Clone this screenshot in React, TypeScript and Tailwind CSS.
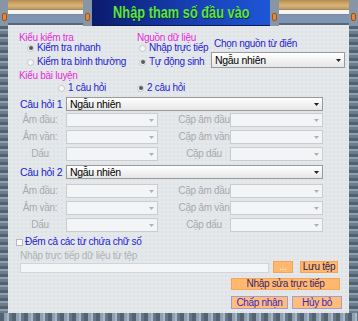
import React from "react";

const tile =
  "bg-[repeating-linear-gradient(180deg,#53626f_0px,#53626f_3px,#8fa0b0_3px,#8fa0b0_5px,#6b7c8c_5px,#6b7c8c_8px)]";
const tileH =
  "bg-[repeating-linear-gradient(90deg,#53626f_0px,#53626f_4px,#8fa0b0_4px,#8fa0b0_7px,#a9b8c6_7px,#a9b8c6_9px,#66778a_9px,#66778a_12px)]";

function Post({ w }: { w: string }) {
  return (
    <div className={`${w} h-full flex flex-col items-center bg-[#8795a4]`}>
      <div className="mt-[13px] w-[5px] h-[8px] rounded-[2px] bg-[#e08a3a] border border-[#9a5020]" />
    </div>
  );
}

function Wood() {
  return (
    <div className="flex-1 h-full flex flex-col">
      <div className="h-[9px] bg-[linear-gradient(180deg,#b58c50,#d8b478_60%,#c49a5e)]" />
      <div className="h-[1px] bg-[#9c8a70]" />
      <div className="h-[4px] bg-[#f4f4f2]" />
      <div className="h-[1px] bg-[#7a8898]" />
      <div className="h-[8px] bg-[#7d94b2]" />
      <div className="h-[2px] bg-[#56677c]" />
      <div className="flex-1 bg-[#e6e9ec]" />
    </div>
  );
}

function Radio({ checked, label }: { checked?: boolean; label: string }) {
  return (
    <div className="flex items-center gap-[3px] h-[10px]">
      <span className="w-[7px] h-[7px] rounded-full border border-[#c8c8c8] bg-[#f6f6f6] flex items-center justify-center">
        {checked && <span className="w-[4px] h-[4px] rounded-full bg-[#5a5a5a]" />}
      </span>
      <span className="text-[#2323d2] whitespace-nowrap">{label}</span>
    </div>
  );
}

function Arrow({ dim }: { dim?: boolean }) {
  return (
    <svg width="5" height="3" viewBox="0 0 5 3" className="mr-[3px]">
      <path d="M0 0 L5 0 L2.5 3 Z" fill={dim ? "#b0b0b0" : "#202020"} />
    </svg>
  );
}

function Select({ w, h = "h-[14px]" }: { w: string; h?: string }) {
  return (
    <div
      className={`${w} ${h} flex items-center justify-between border border-[#9a9a9a] bg-[linear-gradient(180deg,#ffffff,#e6e6e6)] text-black`}
    >
      <span className="pl-[3px] text-[10.5px]">Ngẫu nhiên</span>
      <Arrow />
    </div>
  );
}

function DimSelect({ w }: { w: string }) {
  return (
    <div className={`${w} h-[14px] flex items-center justify-end border border-[#c9cdd1] bg-[#f3f4f5]`}>
      <Arrow dim />
    </div>
  );
}

function SubRow({ a, b, mt }: { a: string; b: string; mt: string }) {
  return (
    <div className={`flex items-center h-[14px] ${mt}`}>
      <div className="ml-[10px] w-[44px] flex justify-center whitespace-nowrap text-[#a7a9ab]">{a}</div>
      <div className="ml-[4px]">
        <DimSelect w="w-[92px]" />
      </div>
      <div className="ml-[20px] w-[52px] flex justify-center whitespace-nowrap text-[#a7a9ab]">{b}</div>
      <DimSelect w="w-[93px]" />
    </div>
  );
}

function Question({ n, mt }: { n: string; mt: string }) {
  return (
    <div className={`flex items-center h-[14px] ${mt}`}>
      <div className="ml-[12px] w-[46px] whitespace-nowrap text-[#2323d2] text-[10.5px]">Câu hỏi {n}</div>
      <Select w="w-[257px]" />
    </div>
  );
}

export default function App() {
  return (
    <div className="w-[358px] h-[321px] flex flex-col font-['Liberation_Sans',Arial,sans-serif] text-[10px] leading-[10px] tracking-[-0.3px]">
      {/* Header */}
      <div className="h-[26px] flex">
        <div className="w-[92px] flex">
          <Post w="w-[8px]" />
          <Wood />
          <Post w="w-[9px]" />
        </div>
        <div className="w-[178px] flex items-center justify-center bg-[linear-gradient(90deg,#0b1a6c,#173fb4_55%,#1e56d6)] border-b border-[#0a1850]">
          <span className="inline-block scale-x-[0.8] text-[16px] leading-[18px] font-bold tracking-normal text-[#5ce34e] [text-shadow:1px_1px_0_#0b2a18]">
            Nhập tham số đầu vào
          </span>
        </div>
        <div className="w-[88px] flex">
          <Post w="w-[9px]" />
          <Wood />
          <Post w="w-[9px]" />
        </div>
      </div>

      {/* Body */}
      <div className="flex h-[287px]">
        <div className={`w-[8px] ${tile}`} />
        <div className="w-[341px] bg-[#e5e8eb] bg-[radial-gradient(#d3d8dd_0.6px,transparent_0.8px)] bg-[length:4px_4px] flex flex-col">
          {/* Top options */}
          <div className="flex mt-[7px]">
            <div className="w-[129px] pl-[11px] flex flex-col">
              <div className="h-[10px] text-[#e62ade]">Kiểu kiểm tra</div>
              <div className="pl-[8px]">
                <Radio checked label="Kiểm tra nhanh" />
              </div>
              <div className="pl-[8px] mt-[4px]">
                <Radio label="Kiểm tra bình thường" />
              </div>
            </div>
            <div className="w-[74px] flex flex-col">
              <div className="h-[10px] text-[#e62ade] whitespace-nowrap">Nguồn dữ liệu</div>
              <div className="pl-[2px]">
                <Radio label="Nhập trực tiếp" />
              </div>
              <div className="pl-[2px] mt-[4px]">
                <Radio checked label="Tự động sinh" />
              </div>
            </div>
            <div className="w-[134px] flex flex-col">
              <div className="mt-[6px] h-[10px] pl-[3px] text-[#2323d2] whitespace-nowrap">Chọn nguồn từ điển</div>
              <div className="mt-[3px]">
                <Select w="w-[134px]" h="h-[16px]" />
              </div>
            </div>
          </div>

          <div className="mt-[3px] pl-[11px] h-[10px] text-[#e62ade]">Kiểu bài luyện</div>
          <div className="mt-[2px] flex pl-[50px]">
            <div className="w-[79px]">
              <Radio label="1 câu hỏi" />
            </div>
            <Radio checked label="2 câu hỏi" />
          </div>

          <Question n="1" mt="mt-[4px]" />
          <SubRow a="Âm đầu:" b="Cặp âm đầu" mt="mt-[2px]" />
          <SubRow a="Âm vần:" b="Cặp âm vần" mt="mt-[3px]" />
          <SubRow a="Dấu" b="Cặp dấu" mt="mt-[3px]" />

          <Question n="2" mt="mt-[4px]" />
          <SubRow a="Âm đầu:" b="Cặp âm đầu" mt="mt-[5px]" />
          <SubRow a="Âm vần:" b="Cặp âm vần" mt="mt-[3px]" />
          <SubRow a="Dấu" b="Cặp dấu" mt="mt-[3px]" />

          <div className="mt-[5px] h-[10px] pl-[8px] flex items-center gap-[2px]">
            <span className="w-[7px] h-[7px] border border-[#b8b8b8] bg-[#f8f8f8]" />
            <span className="text-[#2323d2] whitespace-nowrap">Đếm cả các từ chứa chữ số</span>
          </div>
          <div className="mt-[4px] h-[10px] pl-[12px] text-[#aeb1b4] whitespace-nowrap">
            Nhập trực tiếp dữ liệu từ tệp
          </div>

          <div className="flex items-end h-[12px]">
            <div className="ml-[12px] w-[249px] h-[10px] border border-[#d2d5d8] bg-[#f4f5f6]" />
            <div className="ml-[4px] w-[20px] h-[12px] flex items-center justify-center bg-[#ffb86e] border border-[#f3a456] text-white">
              ...
            </div>
            <div className="ml-[7px] w-[38px] h-[12px] flex items-center justify-center bg-[#ffb86e] border border-[#f3a456] text-[#2a1f5a] whitespace-nowrap">
              Lưu tệp
            </div>
          </div>

          <div className="mt-[5px] ml-[223px] w-[109px] h-[12px] flex items-center justify-center bg-[#ffb86e] border border-[#f3a456] text-[#3a2474] whitespace-nowrap">
            Nhập sửa trực tiếp
          </div>

          <div className="mt-[6px] flex h-[13px]">
            <div className="ml-[223px] w-[57px] flex items-center justify-center bg-[#ffbd78] border border-[#a99ad6] text-[#3a28c8] whitespace-nowrap">
              Chấp nhận
            </div>
            <div className="ml-[4px] w-[50px] flex items-center justify-center bg-[#ffbd78] border border-[#a99ad6] text-[#3a28c8] whitespace-nowrap">
              Hủy bỏ
            </div>
          </div>
        </div>
        <div className={`w-[9px] ${tile}`} />
      </div>

      {/* Bottom border */}
      <div className={`h-[8px] ${tileH}`} />
    </div>
  );
}
